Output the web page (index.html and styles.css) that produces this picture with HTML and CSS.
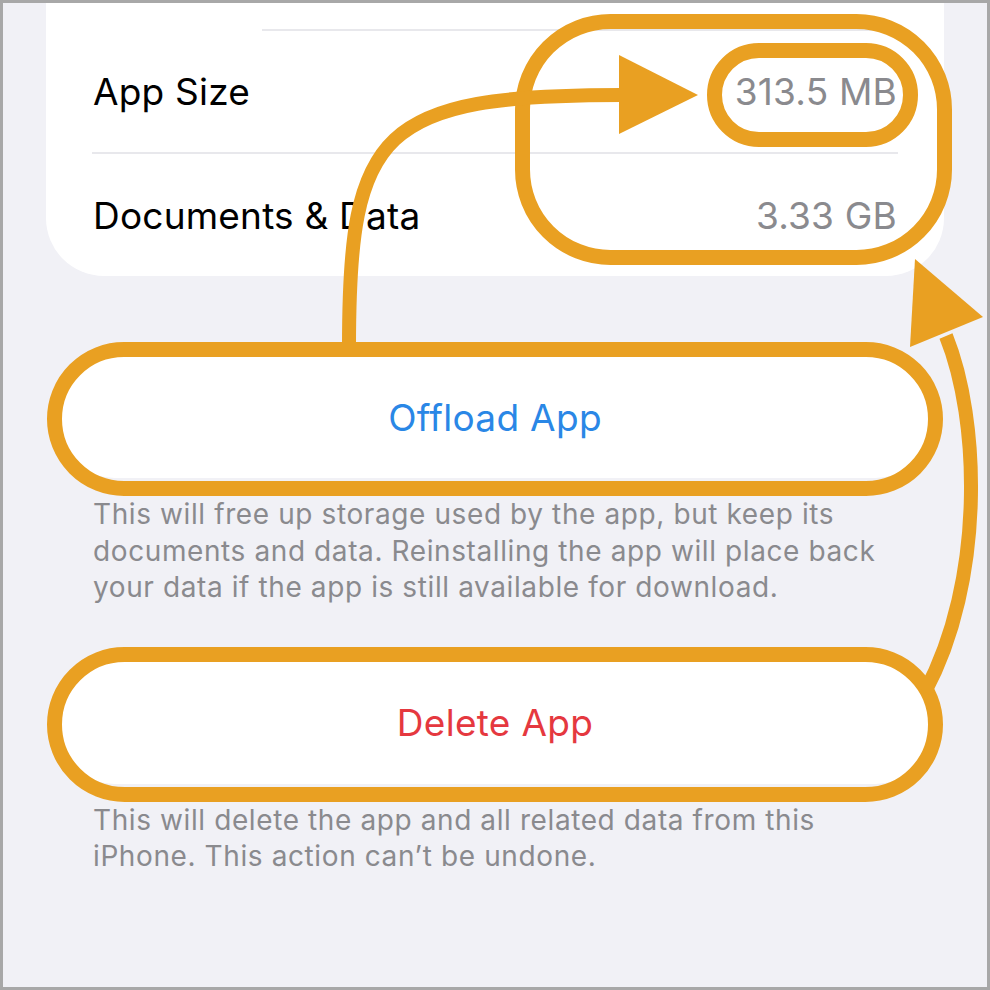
FILE: index.html
```html
<!DOCTYPE html>
<html lang="en">
<head>
    <meta charset="UTF-8">
    <meta name="viewport" content="width=device-width, initial-scale=1.0">
    <title>App Storage</title>
    <link rel="stylesheet" href="styles.css">
</head>
<body>
    <div class="frame">
        <div class="card">
            <div class="card-top"></div>
            <div class="separator separator-wide"></div>
            <div class="row">
                <span class="label">App Size</span>
                <span class="value">313.5 MB</span>
            </div>
            <div class="separator"></div>
            <div class="row">
                <span class="label">Documents &amp; Data</span>
                <span class="value">3.33 GB</span>
            </div>
        </div>

        <button class="action offload">Offload App</button>
        <p class="footnote">This will free up storage used by the app, but keep its documents and data. Reinstalling the app will place back your data if the app is still available for download.</p>

        <button class="action delete">Delete App</button>
        <p class="footnote">This will delete the app and all related data from this iPhone. This action can’t be undone.</p>
    </div>

    <!-- annotation marks drawn over the screenshot -->
    <svg class="marks" width="990" height="990" viewBox="0 0 990 990">
        <g fill="none" stroke="#e9a022" stroke-width="15">
            <rect x="522.5" y="21.5" width="422" height="236" rx="88"/>
            <rect x="714.5" y="50.5" width="196" height="89" rx="44.5"/>
            <rect x="54.5" y="349.5" width="881" height="139" rx="69.5"/>
            <rect x="54.5" y="654.5" width="881" height="140" rx="70"/>
        </g>
        <g fill="none" stroke="#e9a022" stroke-width="14">
            <path d="M 349 346 C 349 130 380 95 622 95"/>
            <path d="M 925 692 C 985 580 980 420 946 336"/>
        </g>
        <g fill="#e9a022">
            <polygon points="619,55 619,134 698,95"/>
            <polygon points="915,259 983,317 910,347"/>
        </g>
    </svg>
</body>
</html>
```

FILE: styles.css
```css
body {
    margin: 0;
    padding: 0;
    position: relative;
    font-family: Inter, "Noto Sans", sans-serif;
    background-color: #f2f2f7;
}

.frame {
    width: 990px;
    height: 990px;
    box-sizing: border-box;
    border: 3px solid #a8a8a8;
    background-color: #f1f1f6;
    overflow: hidden;
}

.card {
    margin-left: 43px;
    width: 898px;
    background: #fff;
    border-radius: 0 0 58px 58px;
}

.card-top {
    height: 26px;
}

.separator {
    height: 2px;
    margin: 0 46px;
    background-color: #e8e8ec;
}

.separator-wide {
    margin-left: 216px;
}

.row {
    height: 121px;
    padding: 0 47px;
    display: flex;
    align-items: center;
    justify-content: space-between;
    font-size: 37px;
    letter-spacing: 0.2px;
}

.row:last-child {
    height: 122px;
}

.label {
    color: #000;
}

.value {
    color: #8a8a8e;
}

.action {
    display: block;
    margin: 80px 0 0 51px;
    width: 882px;
    height: 122px;
    border: none;
    border-radius: 61px;
    background: #fff;
    font-family: Inter, "Noto Sans", sans-serif;
    font-size: 37px;
    letter-spacing: 0.3px;
    padding: 0;
}

.offload {
    color: #2a87e6;
}

.delete {
    margin-top: 56px;
    color: #e5383f;
}

.footnote {
    margin: 0;
    padding: 18px 90px 0 90px;
    font-size: 28px;
    line-height: 36.5px;
    letter-spacing: 0.6px;
    color: #8a8a8e;
}

.marks {
    position: absolute;
    top: 0;
    left: 0;
}
```
